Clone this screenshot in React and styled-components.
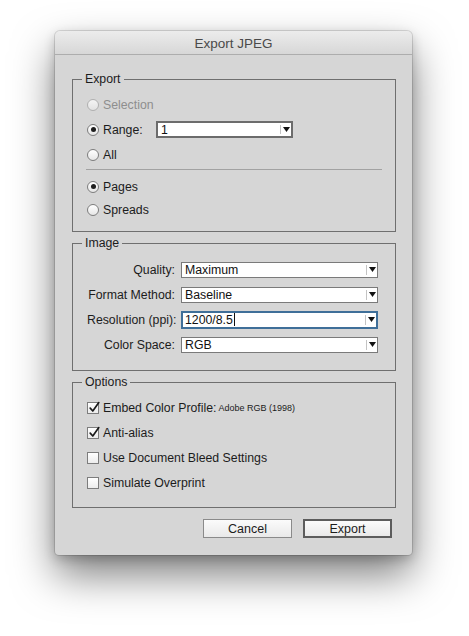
import React from 'react'
import styled, {createGlobalStyle} from 'styled-components'

const Global = createGlobalStyle`
  html, body {
    margin: 0;
    padding: 0;
    background: #ffffff;
  }
  body {
    font-family: "Liberation Sans", Arial, sans-serif;
    font-size: 12.3px;
    color: #1c1c1c;
  }
`

const Page = styled.div`
  width: 469px;
  height: 636px;
  padding: 31px 0 0 55px;
  box-sizing: border-box;
  overflow: hidden;
`

const Window = styled.div`
  width: 357px;
  height: 524px;
  box-sizing: border-box;
  background: #d6d6d6;
  border-radius: 5px 5px 4px 4px;
  box-shadow: 0 0 0 1px rgba(0, 0, 0, 0.12), 0 20px 42px rgba(0, 0, 0, 0.5), 0 4px 12px rgba(0, 0, 0, 0.2);
  display: flex;
  flex-direction: column;
  overflow: hidden;
`

const TitleBar = styled.div`
  height: 24px;
  flex: none;
  display: flex;
  align-items: center;
  justify-content: center;
  background: linear-gradient(#ececec, #d7d7d7);
  border-bottom: 1px solid #adadad;
  font-size: 13.5px;
  color: #4a4a4a;
  padding-top: 1px;
  box-sizing: border-box;
`

const Body = styled.div`
  padding: 17px 16px 0 17px;
  display: flex;
  flex-direction: column;
  gap: 4px;
`

const Group = styled.fieldset`
  margin: 0;
  min-width: 0;
  border: 1px solid #6f6f6f;
  padding: ${p => p.$pad};
`

const Legend = styled.legend`
  padding: 0 3px;
  margin-left: -5px;
  line-height: 15px;
  font-size: 12.3px;
  color: #1c1c1c;
`

const Row = styled.div`
  height: ${p => p.$h || 25}px;
  display: flex;
  align-items: center;
  color: ${p => (p.$disabled ? '#8e8e8e' : '#1c1c1c')};
`

const Radio = styled.span`
  width: 12px;
  height: 12px;
  box-sizing: border-box;
  border-radius: 50%;
  border: 1px solid ${p => (p.$disabled ? '#b0b0b0' : '#7d7d7d')};
  background: ${p => (p.$disabled ? 'linear-gradient(#f4f4f4, #e2e2e2)' : 'linear-gradient(#ffffff, #e6e6e6)')};
  margin-right: 4px;
  display: flex;
  align-items: center;
  justify-content: center;
  flex: none;

  &::after {
    content: '';
    display: ${p => (p.$checked ? 'block' : 'none')};
    width: 5px;
    height: 5px;
    border-radius: 50%;
    background: #1e1e1e;
  }
`

const Check = styled.span`
  width: 12px;
  height: 12px;
  box-sizing: border-box;
  border: 1px solid #7d7d7d;
  background: linear-gradient(#ffffff, #ececec);
  margin-right: 4px;
  flex: none;
  position: relative;

  svg {
    position: absolute;
    left: 0;
    top: -3px;
  }
`

const Separator = styled.div`
  height: 1px;
  background: #a2a2a2;
  margin: 2px -4px 5px -1px;
`

const RangeLabel = styled.span`
  width: 53px;
`

const Select = styled.div`
  width: ${p => p.$w}px;
  height: ${p => p.$h}px;
  box-sizing: border-box;
  background: #ffffff;
  border: ${p => (p.$focus ? '2px solid #3f6f99' : `${p.$bw || 1}px solid ${p.$bc || '#7a7a7a'}`)};
  display: flex;
  align-items: center;
  font-size: 12.3px;
  color: #111;
`

const Value = styled.span`
  flex: 1;
  padding-left: ${p => (p.$focus ? 2 : 3)}px;
  display: flex;
  align-items: center;
  white-space: nowrap;
`

const Caret = styled.span`
  display: inline-block;
  width: 1px;
  height: 13px;
  background: #111;
  margin-left: 1px;
`

const Arrow = styled.span`
  width: 11px;
  align-self: stretch;
  display: flex;
  align-items: center;
  justify-content: center;
  position: relative;

  &::before {
    content: '';
    position: absolute;
    left: 0;
    top: 2px;
    bottom: 2px;
    width: 1px;
    background: #c4c4c4;
  }

  svg {
    margin-left: 1px;
  }
`

const Grid = styled.div`
  display: grid;
  grid-template-columns: 88px 197px;
  column-gap: 6px;
  grid-auto-rows: 25px;
  align-items: center;
`

const Label = styled.span`
  text-align: right;
  white-space: nowrap;
`

const Small = styled.span`
  font-size: 9px;
  margin-left: 2px;
  padding-top: 1px;
`

const Buttons = styled.div`
  display: flex;
  justify-content: flex-end;
  gap: 11px;
  margin-top: 7px;
  padding-right: 4px;
`

const Button = styled.div`
  width: 89px;
  height: 19px;
  box-sizing: border-box;
  border: ${p => (p.$primary ? '2px solid #5c5c5c' : '1px solid #8a8a8a')};
  background: linear-gradient(#fbfbfb, #e9e9e9);
  display: flex;
  align-items: center;
  justify-content: center;
  font-size: 12.5px;
  color: #1c1c1c;
`

const Tri = () => (
  <svg width="7" height="5" viewBox="0 0 7 5">
    <path d="M0 0 H7 L3.5 5 Z" fill="#111" />
  </svg>
)

const Tick = () => (
  <svg width="13" height="14" viewBox="0 0 13 14">
    <path d="M2.2 8.2 L4.8 11 L10.8 2.6" fill="none" stroke="#1a1a1a" strokeWidth="1.7" strokeLinecap="round" strokeLinejoin="round" />
  </svg>
)

function Dropdown({value, focus, w = 197, h = 16, bw, bc}) {
  return (
    <Select $w={w} $h={h} $focus={focus} $bw={bw} $bc={bc}>
      <Value $focus={focus}>
        {value}
        {focus && <Caret />}
      </Value>
      <Arrow>
        <Tri />
      </Arrow>
    </Select>
  )
}

function Option({checked, children}) {
  return (
    <Row>
      <Check>{checked && <Tick />}</Check>
      {children}
    </Row>
  )
}

export default function App() {
  return (
    <Page>
      <Global />
      <Window>
        <TitleBar>Export JPEG</TitleBar>
        <Body>
          <Group $pad="5px 17px 10px 14px">
            <Legend>Export</Legend>
            <Row $disabled>
              <Radio $disabled />
              Selection
            </Row>
            <Row>
              <Radio $checked />
              <RangeLabel>Range:</RangeLabel>
              <Dropdown value="1" w={137} h={17} bw={2} bc="#6c6c6c" />
            </Row>
            <Row>
              <Radio />
              All
            </Row>
            <Separator />
            <Row $h={23}>
              <Radio $checked />
              Pages
            </Row>
            <Row $h={23}>
              <Radio />
              Spreads
            </Row>
          </Group>

          <Group $pad="6px 17px 13px 14px">
            <Legend>Image</Legend>
            <Grid>
              <Label>Quality:</Label>
              <Dropdown value="Maximum" />
              <Label>Format Method:</Label>
              <Dropdown value="Baseline" />
              <Label>Resolution (ppi):</Label>
              <Dropdown value="1200/8.5" focus h={18} />
              <Label>Color Space:</Label>
              <Dropdown value="RGB" />
            </Grid>
          </Group>

          <Group $pad="5px 17px 12px 14px">
            <Legend>Options</Legend>
            <Option checked>
              Embed Color Profile:<Small>Adobe RGB (1998)</Small>
            </Option>
            <Option checked>Anti-alias</Option>
            <Option>Use Document Bleed Settings</Option>
            <Option>Simulate Overprint</Option>
          </Group>

          <Buttons>
            <Button>Cancel</Button>
            <Button $primary>Export</Button>
          </Buttons>
        </Body>
      </Window>
    </Page>
  )
}
